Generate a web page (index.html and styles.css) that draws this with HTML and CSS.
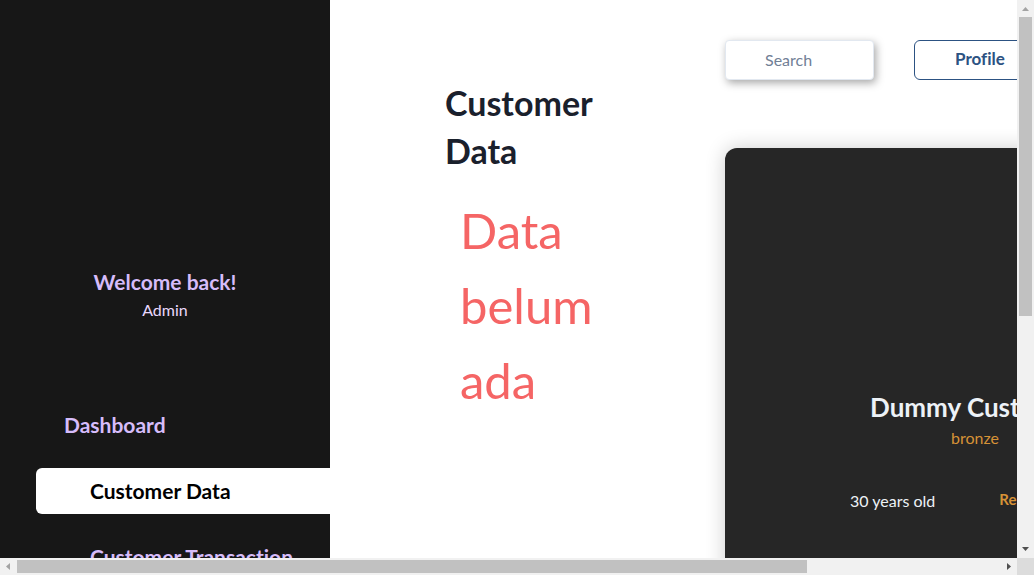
FILE: index.html
```html
<!DOCTYPE html>
<html lang="en">
<head>
<meta charset="utf-8">
<title>Customer Data</title>
<link rel="stylesheet" href="styles.css">
</head>
<body>
<div class="window">
  <div class="viewport">
    <aside class="sidebar">
      <div class="welcome">
        <h2 class="welcome-title">Welcome back!</h2>
        <p class="welcome-name">Admin</p>
      </div>
      <nav class="nav">
        <a class="nav-link nav-top" href="#">Dashboard</a>
        <a class="nav-link nav-active" href="#" aria-current="page">Customer Data</a>
        <a class="nav-link" href="#">Customer Transaction</a>
      </nav>
    </aside>
    <main class="main">
      <section class="list">
        <h1 class="title">Customer Data</h1>
        <p class="empty">Data belum ada</p>
      </section>
      <section class="detail">
        <div class="toolbar">
          <input class="search" type="text" placeholder="Search" aria-label="Search">
          <button class="profile" type="button">Profile</button>
        </div>
        <article class="card">
          <h2 class="card-name">Dummy Customer</h2>
          <p class="card-tier">bronze</p>
          <div class="card-facts">
            <span class="card-age">30 years old</span>
            <button class="card-action" type="button">Remove</button>
          </div>
        </article>
      </section>
    </main>
  </div>
  <div class="bar bar-y">
    <svg class="arrow arrow-off" viewBox="0 0 17 17"><path d="M5 11h7L8.500 7z"/></svg>
    <div class="track"><div class="thumb thumb-y"></div></div>
    <svg class="arrow" viewBox="0 0 17 17"><path d="M5 6h7l-3.500 4z"/></svg>
  </div>
  <div class="bar bar-x">
    <svg class="arrow arrow-off" viewBox="0 0 17 17"><path d="M10 5v7L6 8.500z"/></svg>
    <div class="track"><div class="thumb thumb-x"></div></div>
    <svg class="arrow" viewBox="0 0 17 17"><path d="M7 5v7l4-3.500z"/></svg>
  </div>
  <div class="corner"></div>
</div>
</body>
</html>
```
FILE: styles.css
```css
* { box-sizing: border-box; }
body {
  margin: 0;
  overflow: hidden;
  background: #fff;
  color: #1a202c;
  font-family: Lato, "Noto Sans", sans-serif;
  font-size: 16px;
  font-variant-ligatures: none;
  line-height: 24px;
}
h1, h2, p { margin: 0; }
button, input { font: inherit; font-variant-ligatures: none; }

.window {
  display: grid;
  grid-template: minmax(0, 1fr) 17px / minmax(0, 1fr) 17px;
  height: 100vh;
}
.viewport { display: flex; overflow: hidden; }

.sidebar {
  flex: 0 0 330px;
  padding: 266px 0 0 36px;
  background: #171717;
}
.welcome { margin-right: 36px; text-align: center; }
.welcome-title {
  color: #d6bcfa;
  font-size: 21px;
  font-weight: 700;
  line-height: 32px;
}
.welcome-name { color: #e9d8fd; }
.nav { display: flex; flex-direction: column; gap: 20px; padding-top: 80px; }
.nav-link {
  padding: 8px 0 8px 54px;
  border-radius: 6px 0 0 6px;
  color: #d6bcfa;
  font-size: 21px;
  font-weight: 700;
  line-height: 30px;
  text-decoration: none;
  white-space: nowrap;
}
.nav-top { padding-left: 28px; }
.nav-active { background: #fff; color: #000; }

.main {
  display: grid;
  flex: 1 0 auto;
  grid-template-columns: 160px 500px;
  column-gap: 120px;
  padding: 40px 40px 0 115px;
}
.list { padding-top: 39px; }
.title { font-size: 34px; font-weight: 700; line-height: 48px; }
.empty {
  padding: 18px 15px;
  color: #f56565;
  font-size: 49px;
  line-height: 75px;
}
.toolbar { display: flex; gap: 40px; }
.search {
  width: 149px;
  height: 40px;
  padding: 0 39px 2px;
  border: 1px solid #e2e8f0;
  border-radius: 4px;
  background: #fff;
  box-shadow: 2px 3px 8px rgba(0, 0, 0, 0.35);
}
.search::placeholder { color: #718096; opacity: 1; }
.profile {
  height: 40px;
  padding: 0 40px 2px;
  border: 1px solid #2c5282;
  border-radius: 6px;
  background: #fff;
  color: #2c5282;
  font-size: 17px;
  font-weight: 700;
}
.card {
  min-height: 720px;
  margin-top: 68px;
  padding-top: 240px;
  border-radius: 12px;
  background: #262626;
  box-shadow: 0 0 20px rgba(0, 0, 0, 0.2);
  color: #edf2f7;
  text-align: center;
}
.card-name { font-size: 26px; font-weight: 700; line-height: 38px; }
.card-tier { color: #d69236; }
.card-facts {
  display: flex;
  gap: 64px;
  padding: 39px 0 0 125px;
}
.card-action {
  align-self: flex-start;
  padding: 0;
  border: 0;
  background: none;
  color: #d69236;
  font-size: 15px;
  font-weight: 700;
  line-height: 20px;
}

.bar { display: flex; background: #f1f1f1; }
.bar-y { flex-direction: column; }
.track { display: flex; flex: 1; }
.bar-y .track { flex-direction: column; padding: 0 2px; }
.bar-x .track { padding: 2px 0; }
.thumb { background: #c1c1c1; }
.thumb-y { height: 57%; }
.thumb-x { width: 80.400%; }
.arrow { flex: none; width: 17px; height: 17px; fill: #505050; }
.arrow-off { fill: #a3a3a3; }
.corner { background: #dcdcdc; }
```
